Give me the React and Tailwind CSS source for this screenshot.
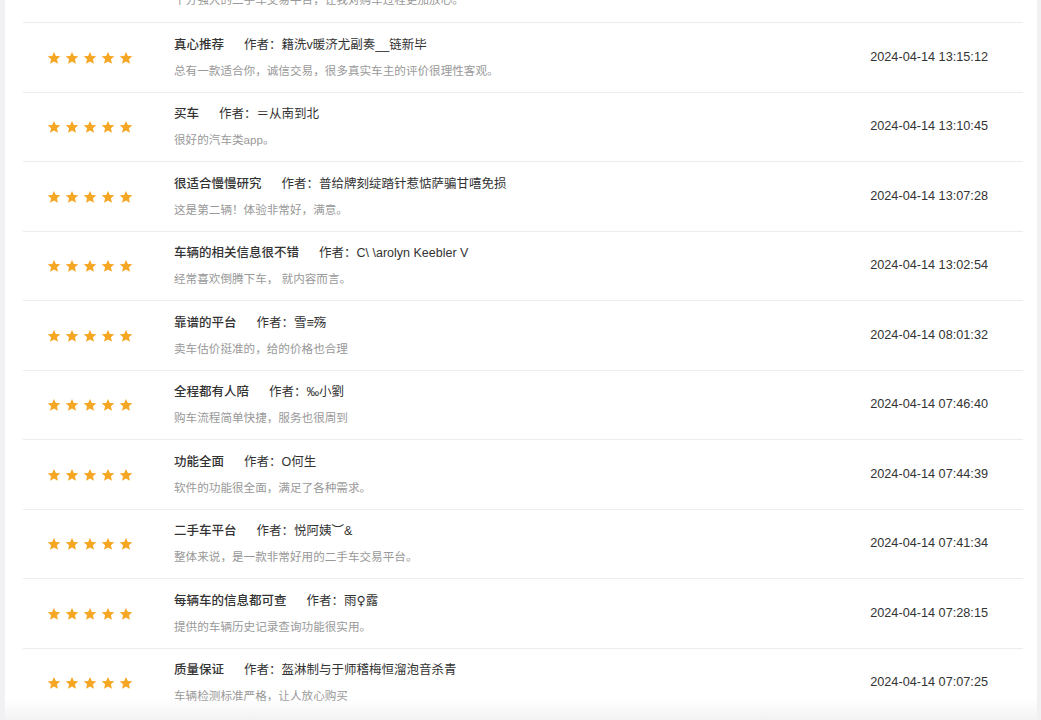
import React from 'react';

const TOP_PARTIAL = '十分强大的二手车交易平台，让我对购车过程更加放心。';

const REVIEWS = [
  { title: '真心推荐', author: '籍洗v暖济尤副奏__链新毕', content: '总有一款适合你，诚信交易，很多真实车主的评价很理性客观。', time: '2024-04-14 13:15:12' },
  { title: '买车', author: '＝从南到北', content: '很好的汽车类app。', time: '2024-04-14 13:10:45' },
  { title: '很适合慢慢研究', author: '普给牌刻绽踏针惹惦萨骗甘嘻免损', content: '这是第二辆！体验非常好，满意。', time: '2024-04-14 13:07:28' },
  { title: '车辆的相关信息很不错', author: 'C\\ \\arolyn Keebler V', content: '经常喜欢倒腾下车， 就内容而言。', time: '2024-04-14 13:02:54' },
  { title: '靠谱的平台', author: '雪≡殇', content: '卖车估价挺准的，给的价格也合理', time: '2024-04-14 08:01:32' },
  { title: '全程都有人陪', author: '‰小劉', content: '购车流程简单快捷，服务也很周到', time: '2024-04-14 07:46:40' },
  { title: '功能全面', author: 'O何生', content: '软件的功能很全面，满足了各种需求。', time: '2024-04-14 07:44:39' },
  { title: '二手车平台', author: '悦阿姨︶&', content: '整体来说，是一款非常好用的二手车交易平台。', time: '2024-04-14 07:41:34' },
  {
    title: '每辆车的信息都可查',
    author: (
      <>
        雨<span style={{ fontFamily: '"DejaVu Sans", sans-serif' }}>♀</span>露
      </>
    ),
    content: '提供的车辆历史记录查询功能很实用。',
    time: '2024-04-14 07:28:15',
  },
  { title: '质量保证', author: '盔淋制与于师稽梅恒溜泡音杀青', content: '车辆检测标准严格，让人放心购买', time: '2024-04-14 07:07:25' },
];

function Star() {
  return (
    <svg width="14" height="14" viewBox="0 0 24 24" className="shrink-0">
      <path
        d="M12 1.5l3.15 7 7.65.7-5.8 5.05 1.75 7.55L12 17.9 5.25 21.8 7 14.25 1.2 9.2l7.65-.7z"
        fill="#f5a623"
      />
    </svg>
  );
}

function ReviewRow({ review }) {
  return (
    <div className="flex items-center h-[69.5px] border-b border-[#ececec] box-border">
      <div className="w-[151px] pl-[24px] pt-[1px] flex items-center gap-[4px] shrink-0">
        {[0, 1, 2, 3, 4].map((i) => (
          <Star key={i} />
        ))}
      </div>
      <div className="flex-1 min-w-0 flex flex-col gap-[10px] mt-[1px]">
        <div className="flex items-center text-[12.5px] leading-[16px] text-[#333]">
          <span className="font-medium">{review.title}</span>
          <span className="ml-[20px]">作者：{review.author}</span>
        </div>
        <div className="text-[11.6px] leading-[16px] text-[#999]">{review.content}</div>
      </div>
      <div className="pr-[35px] text-[12.7px] text-[#333] shrink-0">{review.time}</div>
    </div>
  );
}

export default function App() {
  return (
    <div
      className="relative h-[720px] overflow-hidden bg-white border-l-[5px] border-r-[4px] border-[#f1f1f3]"
      style={{ fontFamily: '"Liberation Sans", "Noto Sans CJK SC", sans-serif' }}
    >
      <div className="ml-[18px] mr-[14px]">
        <div className="h-[23px] border-b border-[#ececec] box-border pl-[151px] overflow-hidden">
          <div className="-mt-[8px] text-[11.6px] leading-[16px] text-[#999]">{TOP_PARTIAL}</div>
        </div>
        {REVIEWS.map((r, i) => (
          <ReviewRow key={i} review={r} />
        ))}
      </div>
      <div className="absolute left-0 right-0 bottom-0 h-[22px] bg-gradient-to-b from-transparent to-[#f3f3f3] pointer-events-none" />
    </div>
  );
}
